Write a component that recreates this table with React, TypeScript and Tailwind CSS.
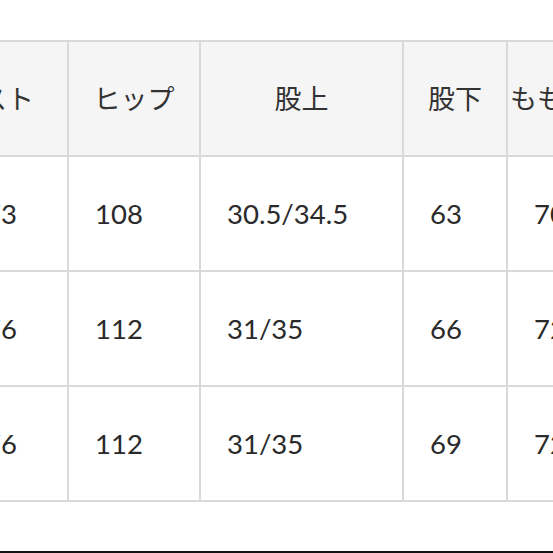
const headers = ["ウエスト", "ヒップ", "股上", "股下", "もも周り"];

const rows = [
  ["73", "108", "30.5/34.5", "63", "70"],
  ["76", "112", "31/35", "66", "72"],
  ["76", "112", "31/35", "69", "72"],
];

const jp = { fontFamily: '"Noto Sans CJK JP", "Noto Sans", sans-serif' };
const lato = { fontFamily: 'Lato, "Noto Sans CJK JP", sans-serif' };

export default function App() {
  return (
    <div className="flex h-[553px] w-[553px] flex-col overflow-hidden bg-white pt-[40px]">
      <div className="-ml-[41px] grid w-max grid-cols-[110px_132px_203px_104px_114px] border-t-2 border-[#d9d9d9]">
        {headers.map((h, i) => (
          <div
            key={h}
            style={jp}
            className={
              i === 0
                ? "flex h-[115px] items-center justify-end border-r-2 border-b-2 border-[#d9d9d9] bg-[#f5f5f5] pr-[33px] text-[27px] whitespace-nowrap text-[#333]"
                : "flex h-[115px] items-center justify-center border-r-2 border-b-2 border-[#d9d9d9] bg-[#f5f5f5] text-[27px] whitespace-nowrap text-[#333]"
            }
          >
            {h}
          </div>
        ))}
        {rows.map((r, ri) =>
          r.map((v, ci) => (
            <div
              key={ri + "-" + ci}
              style={lato}
              className="flex h-[115px] items-center border-r-2 border-b-2 border-[#d9d9d9] bg-white pl-[26px] text-[27.5px] whitespace-nowrap text-[#2a2a2a]"
            >
              {v}
            </div>
          ))
        )}
      </div>
      <div className="mt-auto h-[2px] w-full bg-[#111]" />
    </div>
  );
}
